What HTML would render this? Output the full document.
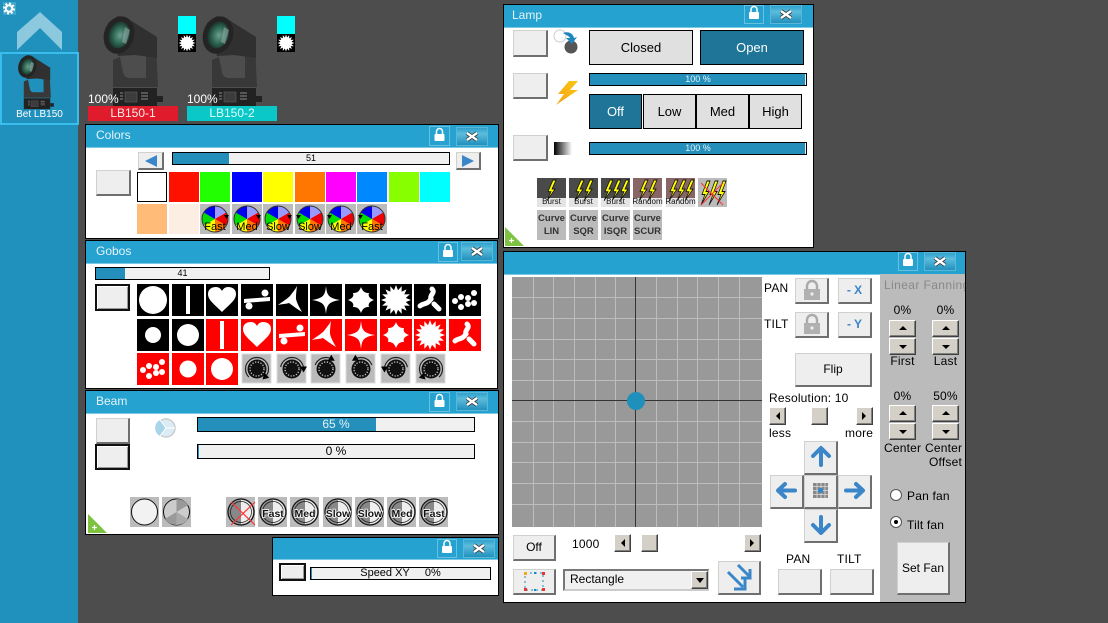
<!DOCTYPE html>
<html><head><meta charset="utf-8"><style>
html,body{margin:0;padding:0}
body{width:1108px;height:623px;background:#4d4d4d;overflow:hidden;position:relative;font-family:"Liberation Sans",sans-serif;font-size:12px;color:#000}
div{position:absolute;box-sizing:border-box;white-space:nowrap}
.w{background:#fff;border:1px solid #000}
.tb{left:0;top:0;right:0;background:#25a2cf;border-bottom:1px solid #7cc9e4;color:#e6f4fa;font-size:12px;padding-left:10px}
.b{background:#eee;border:1px solid;border-color:#d0d0cc #6f6f6f #6f6f6f #d0d0cc;border-width:1px 2px 2px 1px;text-align:center}
.bk{background:#eee;border:2px solid #111;box-shadow:inset 1px 1px 0 #fff,inset -1px -1px 0 #999}
.p{background:#f0f0f0;border:1px solid #000;overflow:hidden}
.f{left:0;top:0;bottom:0;background:#238fba}
.t{left:0;right:0;top:0;bottom:0;text-align:center}
.m{background:#e0e0e0;border:1px solid #000;text-align:center;font-size:14px}
.on{background:#1f7597;color:#fff}
.s{background:#d4d0c8;border:1px solid;border-color:#fff #404040 #404040 #fff;box-shadow:inset -1px -1px 0 #808080}
.l{font-size:12px;letter-spacing:.2px}
.sw{width:30px;height:30px}
</style></head><body>
<div style="left:0;top:0;width:78px;height:623px;background:#2090bd"></div>
<div style="left:0;top:52px;width:79px;height:73px;border:2px solid #38bdec;background:#2090bd"></div>
<div style="left:0;top:109px;width:79px;text-align:center;color:#fff;font-size:10px;line-height:12px">Bet LB150</div>

<div style="left:88px;top:106px;width:90px;height:15px;background:#e01b2b;color:#ffe9e9;text-align:center;line-height:15px">LB150-1</div>
<div style="left:187px;top:106px;width:90px;height:15px;background:#0bc8c8;color:#dff;text-align:center;line-height:15px">LB150-2</div>
<div style="left:178px;top:16px;width:18px;height:18px;background:#0ff"></div>
<div style="left:277px;top:16px;width:18px;height:18px;background:#0ff"></div>

<!-- Colors -->
<div class="w" style="left:85px;top:124px;width:414px;height:115px"><div class="tb" style="height:23px;line-height:21px"><div style="left:10px;top:0;width:35px;overflow:hidden">Colors</div></div></div>
<div class="b" style="left:96px;top:170px;width:35px;height:26px"></div>
<div class="b" style="left:138px;top:152px;width:26px;height:18px"></div>
<div class="p" style="left:172px;top:152px;width:278px;height:13px;font-size:9px;line-height:11px"><div class="f" style="width:56px"></div><div class="t">51</div></div>
<div class="b" style="left:456px;top:152px;width:25px;height:18px"></div>
<div class="sw" style="left:137px;top:172px;background:#fff;border:1px solid #000"></div>
<div class="sw" style="left:169px;top:172px;background:#f10"></div>
<div class="sw" style="left:200px;top:172px;background:#2f0"></div>
<div class="sw" style="left:232px;top:172px;background:#00f"></div>
<div class="sw" style="left:263px;top:172px;background:#ff0"></div>
<div class="sw" style="left:295px;top:172px;background:#f70"></div>
<div class="sw" style="left:326px;top:172px;background:#f0f"></div>
<div class="sw" style="left:357px;top:172px;background:#08f"></div>
<div class="sw" style="left:389px;top:172px;background:#8f0"></div>
<div class="sw" style="left:420px;top:172px;background:#0ff"></div>
<div class="sw" style="left:137px;top:204px;background:#fb7"></div>
<div class="sw" style="left:169px;top:204px;background:#fdeee4"></div>

<!-- Gobos -->
<div class="w" style="left:85px;top:240px;width:413px;height:149px"><div class="tb" style="height:23px;line-height:21px">Gobos</div></div>
<div class="p" style="left:95px;top:267px;width:175px;height:13px;font-size:9px;line-height:11px"><div class="f" style="width:29px"></div><div class="t">41</div></div>
<div class="bk" style="left:95px;top:284px;width:35px;height:27px"></div>

<!-- Beam -->
<div class="w" style="left:85px;top:390px;width:414px;height:145px"><div class="tb" style="height:23px;line-height:21px">Beam</div></div>
<div class="b" style="left:96px;top:418px;width:34px;height:26px"></div>
<div class="bk" style="left:95px;top:444px;width:35px;height:26px"></div>
<div class="p" style="left:197px;top:417px;width:278px;height:15px;line-height:13px"><div class="f" style="width:178px"></div><div class="t" style="color:#e6f4fa">65 %</div></div>
<div class="p" style="left:197px;top:444px;width:278px;height:15px;line-height:13px"><div class="f" style="width:1px"></div><div class="t">0 %</div></div>

<!-- Speed -->
<div class="w" style="left:272px;top:537px;width:227px;height:59px"><div class="tb" style="height:22px"></div></div>
<div class="bk" style="left:279px;top:563px;width:27px;height:18px"></div>
<div class="p" style="left:310px;top:567px;width:181px;height:13px;line-height:11px;font-size:11px"><div class="f" style="width:1px"></div><div class="t" style="white-space:pre">Speed XY     0%</div></div>

<!-- Lamp -->
<div class="w" style="left:503px;top:4px;width:311px;height:244px"><div class="tb" style="height:23px;line-height:21px;padding-left:8px">Lamp</div></div>
<div class="b" style="left:513px;top:30px;width:35px;height:27px"></div>
<div class="b" style="left:513px;top:73px;width:35px;height:26px"></div>
<div class="b" style="left:513px;top:135px;width:35px;height:26px"></div>
<div class="m" style="left:589px;top:30px;width:104px;height:35px;line-height:33px;font-size:13px">Closed</div>
<div class="m on" style="left:700px;top:30px;width:104px;height:35px;line-height:33px;font-size:13px">Open</div>
<div class="p" style="left:589px;top:73px;width:218px;height:13px;line-height:11px;font-size:9px"><div class="f" style="width:215px"></div><div class="t" style="color:#e6f4fa">100 %</div></div>
<div class="m on" style="left:589px;top:94px;width:53px;height:35px;line-height:33px;font-size:13px">Off</div>
<div class="m" style="left:643px;top:94px;width:53px;height:35px;line-height:33px;font-size:13px">Low</div>
<div class="m" style="left:696px;top:94px;width:53px;height:35px;line-height:33px;font-size:13px">Med</div>
<div class="m" style="left:749px;top:94px;width:53px;height:35px;line-height:33px;font-size:13px">High</div>
<div class="p" style="left:589px;top:142px;width:218px;height:13px;line-height:11px;font-size:9px"><div class="f" style="width:215px"></div><div class="t" style="color:#e6f4fa">100 %</div></div>
<div style="left:554px;top:142px;width:18px;height:13px;background:linear-gradient(90deg,#000,#fff)"></div>

<!-- XY -->
<div class="w" style="left:503px;top:251px;width:463px;height:352px"><div class="tb" style="height:23px"></div></div>
<div style="left:880px;top:274px;width:85px;height:328px;background:#bbb"></div>
<div class="l" style="left:764px;top:281px">PAN</div>
<div class="l" style="left:764px;top:317px">TILT</div>
<div class="b" style="left:795px;top:278px;width:34px;height:26px"></div>
<div class="b" style="left:838px;top:278px;width:34px;height:26px;color:#3a86c8;font-weight:bold;line-height:22px">- X</div>
<div class="b" style="left:795px;top:312px;width:34px;height:26px"></div>
<div class="b" style="left:838px;top:312px;width:34px;height:26px;color:#3a86c8;font-weight:bold;line-height:22px">- Y</div>
<div class="b" style="left:795px;top:353px;width:77px;height:34px;line-height:31px">Flip</div>
<div class="l" style="left:769px;top:391px">Resolution: 10</div>
<div class="s" style="left:769px;top:407px;width:17px;height:18px"></div>
<div class="s" style="left:811px;top:407px;width:17px;height:18px"></div>
<div class="s" style="left:856px;top:407px;width:17px;height:18px"></div>
<div class="l" style="left:769px;top:426px">less</div>
<div class="l" style="left:845px;top:426px">more</div>
<div class="b" style="left:804px;top:441px;width:34px;height:34px"></div>
<div class="b" style="left:770px;top:475px;width:34px;height:34px"></div>
<div class="b" style="left:804px;top:475px;width:34px;height:34px"></div>
<div class="b" style="left:838px;top:475px;width:34px;height:34px"></div>
<div class="b" style="left:804px;top:509px;width:34px;height:34px"></div>
<div class="l" style="left:786px;top:552px">PAN</div>
<div class="l" style="left:837px;top:552px">TILT</div>
<div class="b" style="left:778px;top:569px;width:44px;height:26px"></div>
<div class="b" style="left:830px;top:569px;width:44px;height:26px"></div>
<div class="b" style="left:513px;top:535px;width:43px;height:26px;line-height:23px">Off</div>
<div class="l" style="left:572px;top:537px">1000</div>
<div class="s" style="left:614px;top:534px;width:17px;height:18px"></div>
<div class="s" style="left:641px;top:534px;width:17px;height:18px"></div>
<div class="s" style="left:744px;top:534px;width:17px;height:18px"></div>
<div class="b" style="left:513px;top:569px;width:43px;height:26px"></div>
<div style="left:563px;top:569px;width:146px;height:22px;background:#f0f0f0;border:1px solid;border-color:#777 #ccc #ccc #777;border-width:2px 1px 2px 2px;padding-left:5px;line-height:17px">Rectangle</div>
<div class="s" style="left:691px;top:571px;width:17px;height:18px"></div>
<div class="b" style="left:718px;top:561px;width:43px;height:34px"></div>

<div style="left:884px;top:278px;width:81px;overflow:hidden;color:#888;letter-spacing:.4px">Linear Fanning</div>
<div class="l" style="left:889px;top:303px;width:27px;text-align:center">0%</div>
<div class="l" style="left:932px;top:303px;width:27px;text-align:center">0%</div>
<div class="s" style="left:889px;top:320px;width:27px;height:17px"></div>
<div class="s" style="left:932px;top:320px;width:27px;height:17px"></div>
<div class="s" style="left:889px;top:338px;width:27px;height:17px"></div>
<div class="s" style="left:932px;top:338px;width:27px;height:17px"></div>
<div class="l" style="left:882px;top:354px;width:41px;text-align:center">First</div>
<div class="l" style="left:925px;top:354px;width:41px;text-align:center">Last</div>
<div class="l" style="left:889px;top:389px;width:27px;text-align:center">0%</div>
<div class="l" style="left:932px;top:389px;width:27px;text-align:center">50%</div>
<div class="s" style="left:889px;top:405px;width:27px;height:17px"></div>
<div class="s" style="left:932px;top:405px;width:27px;height:17px"></div>
<div class="s" style="left:889px;top:423px;width:27px;height:17px"></div>
<div class="s" style="left:932px;top:423px;width:27px;height:17px"></div>
<div class="l" style="left:884px;top:441px">Center</div>
<div class="l" style="left:925px;top:441px">Center</div>
<div class="l" style="left:929px;top:455px">Offset</div>
<div class="l" style="left:907px;top:489px">Pan fan</div>
<div class="l" style="left:907px;top:518px">Tilt fan</div>
<div class="b" style="left:897px;top:542px;width:53px;height:53px;line-height:51px">Set Fan</div>

<svg width="1108" height="623" viewBox="0 0 1108 623" style="position:absolute;left:0;top:0" xmlns="http://www.w3.org/2000/svg" font-family="Liberation Sans, sans-serif">
<defs>
<radialGradient id="lens" cx=".55" cy=".5" r=".6"><stop offset="0" stop-color="#6f9f90"/><stop offset=".5" stop-color="#2f6a55"/><stop offset="1" stop-color="#15241f"/></radialGradient>
<linearGradient id="xg" x1="0" y1="0" x2="0" y2="1"><stop offset="0" stop-color="#2a9fcb"/><stop offset=".35" stop-color="#5cbcdd"/><stop offset="1" stop-color="#1f8fbb"/></linearGradient>
<linearGradient id="bg" x1="1" y1="0" x2="0" y2="1"><stop offset="0" stop-color="#f9c80e"/><stop offset="1" stop-color="#f5a31c"/></linearGradient>
<g id="fx">
<path d="M113 106V88H157V106Z" fill="#222"/><path d="M157 96h6v6h-6z" fill="#222"/>
<rect x="125" y="92" width="12" height="10" fill="#3c3c3c" stroke="#666" stroke-width=".5"/><path d="M120 93h3M120 96h3M120 99h3M141 93h7M141 96h7M141 99h7" stroke="#777" stroke-width="1.300"/>
<path d="M146 48L156 44L158 87H113L113 60L120 57L123 72Q124 78 130 78L146 78Z" fill="#383838"/>
<path d="M108 23L118 16L130 20L157 37L157 58L135 55L118 56Z" fill="#303030"/>
<ellipse cx="119" cy="35" rx="15" ry="19" transform="rotate(18 119 35)" fill="#242424"/>
<ellipse cx="119" cy="35" rx="10.500" ry="13.500" transform="rotate(18 119 35)" fill="url(#lens)"/>
<path d="M125 27L130 30L126 44L122 42Z" fill="#a8b8ba" opacity=".5"/>
</g>
<polygon id="star" fill="#fff" transform="translate(16 16)" points="15,0 9.800,2 13.900,5.700 8.300,5.600 10.600,10.600 5.600,8.300 5.700,13.900 2,9.800 0,15 -2,9.800 -5.700,13.900 -5.600,8.300 -10.600,10.600 -8.300,5.600 -13.900,5.700 -9.800,2 -15,0 -9.800,-2 -13.900,-5.700 -8.300,-5.600 -10.600,-10.600 -5.600,-8.300 -5.700,-13.900 -2,-9.800 0,-15 2,-9.800 5.700,-13.900 5.600,-8.300 10.600,-10.600 8.300,-5.600 13.900,-5.700 9.800,-2"/>
<path id="heart" fill="#fff" d="M16 28C8 20 2 16 2 10C2 5 6 3 10 3C13 3 15 5 16 7C17 5 19 3 22 3C26 3 30 5 30 10C30 16 24 20 16 28Z"/>
<g id="bd" fill="#fff"><path d="M3 15L29 13V17L3 19Z"/><circle cx="24" cy="9" r="3.500"/><circle cx="8" cy="22" r="3.500"/></g>
<path id="y" fill="#fff" d="M21 2C20 9 20 12 20 15C21 19 23 23 26 28C21 25 17 22 13 19C10 20 6 20 2 21C6 18 11 15 14 12C16 9 19 6 21 2Z"/>
<path id="s4" fill="#fff" d="M16 2C17 11 18 14 30 16C18 18 17 21 16 30C15 21 14 18 2 16C14 14 15 11 16 2Z"/>
<path id="s5" fill="#fff" d="M16 3C18 8 20 9 24 9C23 12 24 14 29 16C24 18 23 20 24 23C20 23 18 24 16 29C14 24 12 23 8 23C9 20 8 18 3 16C8 14 9 12 8 9C12 9 14 8 16 3Z"/>
<g id="fan" fill="none" stroke="#fff" stroke-width="5" stroke-linecap="round"><path d="M18 5C22 9 15 11 17 15C13 21 9 19 6 22"/><path d="M20 20L25 25"/></g>
<g id="dots" fill="#fff"><circle cx="6" cy="17" r="3"/><circle cx="12" cy="13" r="3"/><circle cx="19" cy="14" r="3"/><circle cx="25" cy="9" r="3"/><circle cx="12" cy="23" r="3"/><circle cx="19" cy="20" r="3"/><circle cx="25" cy="19" r="3"/></g>
<g id="rotb"><rect width="29" height="29" fill="#bbb" stroke="#ddd"/><circle cx="15" cy="15" r="9.500" fill="#111"/><circle cx="15" cy="15" r="7" fill="none" stroke="#ccc" stroke-width="1.300" stroke-dasharray="1.200 1.600"/></g>
<g id="wh"><rect width="30" height="30" fill="#bbb"/>
<path d="M15 15V2A13 13 0 0 1 26.300 8.500Z" fill="#99f"/><path d="M15 15L26.300 8.500A13 13 0 0 1 26.300 21.500Z" fill="#e00"/><path d="M15 15L26.300 21.500A13 13 0 0 1 15 28Z" fill="#f70"/><path d="M15 15V28A13 13 0 0 1 3.700 21.500Z" fill="#ff0"/><path d="M15 15L3.700 21.500A13 13 0 0 1 3.700 8.500Z" fill="#0d0"/><path d="M15 15L3.700 8.500A13 13 0 0 1 15 2Z" fill="#00e"/>
<circle cx="15" cy="15" r="13" fill="none" stroke="#333"/></g>
<g id="bw"><rect width="29" height="30" fill="#bbb"/><path d="M15 3A12 12 0 0 1 15 27Z" fill="#eee"/><path d="M15 3A12 12 0 0 0 15 27Z" fill="#888"/><circle cx="15" cy="15" r="13" fill="none" stroke="#111" stroke-width="1.300"/><circle cx="15" cy="15" r="10.500" fill="none" stroke="#111" stroke-width=".7"/></g>
<path id="bolt" d="M6 0L1 9H4L0 16L8 7H5L9 0Z" fill="#ff0" stroke="#111" stroke-width=".7"/>
<g id="lock"><path d="M-3 0V-2.500a3 3 0 0 1 6 0V0" fill="none" stroke="#fff" stroke-width="1.500"/><rect x="-5" y="0" width="10" height="7" rx="1" fill="#fff"/></g>
<g id="xb"><rect x=".5" y=".5" width="31" height="18" fill="url(#xg)" stroke="#5cb6d8"/><path d="M11 6L21 13M21 6L11 13" stroke="#333" stroke-width="4"/><path d="M11 6L21 13M21 6L11 13" stroke="#fff" stroke-width="2.400"/></g>
<g id="lk2"><path d="M-5 0V-3a5 5 0 0 1 10 0V0" fill="none" stroke="#aaa" stroke-width="2.400"/><rect x="-8" y="0" width="16" height="11" fill="#b0b0b0"/><circle cy="5" r="1.600" fill="#eee"/></g>
<path id="tri" d="M0 0L19 19H0Z" fill="#7dc241"/>
<path id="ah" d="M-3.500 -2.500H3.500L0 3.500Z" fill="#000"/>
</defs>

<!-- sidebar -->
<rect x="3" y="2" width="13" height="13" fill="#3ea5cb"/><circle cx="9" cy="8.500" r="3.200" fill="none" stroke="#fff" stroke-width="2"/><circle cx="9" cy="8.500" r="5" fill="none" stroke="#fff" stroke-width="2" stroke-dasharray="2 1.900"/>
<path d="M40 12L62 32V50L40 28L17 50V32Z" fill="#8cc9df"/>
<use href="#fx" transform="translate(-44 45.500) scale(.6)"/>
<use href="#fx"/>
<use href="#fx" transform="translate(99 0)"/>
<text x="88" y="103" fill="#fff" font-size="12">100%</text><text x="187" y="103" fill="#fff" font-size="12">100%</text>
<g transform="translate(178 34) scale(.5625)"><rect width="32" height="32"/><use href="#star"/></g>
<g transform="translate(277 34) scale(.5625)"><rect width="32" height="32"/><use href="#star"/></g>

<!-- window controls -->
<g>
<rect x="429.500" y="126.500" width="20" height="19" fill="#25a2cf" stroke="#6ac0e0"/><use href="#lock" x="439.500" y="134"/><use href="#xb" x="456" y="127"/>
<rect x="438.500" y="242.500" width="19" height="19" fill="#25a2cf" stroke="#6ac0e0"/><use href="#lock" x="448" y="250"/><use href="#xb" x="461" y="242"/>
<rect x="429.500" y="392.500" width="20" height="19" fill="#25a2cf" stroke="#6ac0e0"/><use href="#lock" x="439.500" y="400"/><use href="#xb" x="456" y="392"/>
<rect x="437.500" y="539.500" width="19" height="18" fill="#25a2cf" stroke="#6ac0e0"/><use href="#lock" x="447" y="546"/><use href="#xb" x="463" y="539"/>
<rect x="744.500" y="5.500" width="19" height="18" fill="#25a2cf" stroke="#6ac0e0"/><use href="#lock" x="754" y="12"/><use href="#xb" x="770" y="5"/>
<rect x="898.500" y="252.500" width="19" height="18" fill="#25a2cf" stroke="#6ac0e0"/><use href="#lock" x="908" y="259"/><use href="#xb" x="924" y="252"/>
</g>

<!-- colors arrows & wheels -->
<path d="M145 161L157 155V167Z" fill="#3a86c8"/><path d="M474 161L462 155V167Z" fill="#3a86c8"/>
<g font-size="11" text-anchor="middle" fill="#000">
<g transform="translate(200 204)"><use href="#wh"/><path d="M24 11h5l-2.500 4z"/><text x="15" y="26">Fast</text></g>
<g transform="translate(232 204)"><use href="#wh"/><path d="M24 11h5l-2.500 4z"/><text x="15" y="26">Med</text></g>
<g transform="translate(263 204)"><use href="#wh"/><path d="M24 11h5l-2.500 4z"/><text x="15" y="26">Slow</text></g>
<g transform="translate(295 204)"><use href="#wh"/><path d="M1 11h5l-2.500 4z"/><text x="15" y="26">Slow</text></g>
<g transform="translate(326 204)"><use href="#wh"/><path d="M1 11h5l-2.500 4z"/><text x="15" y="26">Med</text></g>
<g transform="translate(357 204)"><use href="#wh"/><path d="M1 11h5l-2.500 4z"/><text x="15" y="26">Fast</text></g>
</g>

<!-- gobos -->
<g fill="#000">
<rect x="137" y="284" width="32" height="32"/><circle cx="153" cy="300" r="14" fill="#fff"/>
<rect x="172" y="284" width="32" height="32"/><rect x="186" y="286" width="4" height="28" fill="#fff"/>
<rect x="206" y="284" width="32" height="32"/><use href="#heart" x="206" y="284"/>
<rect x="241" y="284" width="32" height="32"/><use href="#bd" x="241" y="284"/>
<rect x="276" y="284" width="32" height="32"/><use href="#y" x="276" y="284"/>
<rect x="310" y="284" width="32" height="32"/><use href="#s4" x="310" y="284"/>
<rect x="345" y="284" width="32" height="32"/><use href="#s5" x="345" y="284"/>
<rect x="380" y="284" width="32" height="32"/><use href="#star" x="380" y="284"/>
<rect x="414" y="284" width="32" height="32"/><use href="#fan" x="414" y="284"/>
<rect x="449" y="284" width="32" height="32"/><use href="#dots" x="449" y="284"/>
<rect x="137" y="319" width="32" height="32"/><circle cx="153" cy="335" r="8" fill="#fff"/>
<rect x="172" y="319" width="32" height="32"/><circle cx="188" cy="335" r="11" fill="#fff"/>
</g>
<g fill="#f00">
<rect x="206" y="319" width="32" height="32"/><rect x="220" y="321" width="4" height="28" fill="#fff"/>
<rect x="241" y="319" width="32" height="32"/><use href="#heart" x="241" y="319"/>
<rect x="276" y="319" width="32" height="32"/><use href="#bd" x="276" y="319"/>
<rect x="310" y="319" width="32" height="32"/><use href="#y" x="310" y="319"/>
<rect x="345" y="319" width="32" height="32"/><use href="#s4" x="345" y="319"/>
<rect x="380" y="319" width="32" height="32"/><use href="#s5" x="380" y="319"/>
<rect x="414" y="319" width="32" height="32"/><use href="#star" x="414" y="319"/>
<rect x="449" y="319" width="32" height="32"/><use href="#fan" x="449" y="319"/>
<rect x="137" y="353" width="32" height="32"/><use href="#dots" x="137" y="353"/>
<rect x="172" y="353" width="32" height="32"/><circle cx="188" cy="369" r="8.500" fill="#fff"/>
<rect x="206" y="353" width="32" height="32"/><circle cx="222" cy="369" r="11" fill="#fff"/>
</g>
<use href="#rotb" x="242" y="354"/><use href="#rotb" x="277" y="354"/><use href="#rotb" x="311" y="354"/><use href="#rotb" x="346" y="354"/><use href="#rotb" x="381" y="354"/><use href="#rotb" x="416" y="354"/>
<g fill="none" stroke="#222" stroke-width="1.200">
<circle cx="257" cy="369" r="11.500" stroke-dasharray="54 30" transform="rotate(135 257 369)"/>
<circle cx="292" cy="369" r="11.500" stroke-dasharray="34 50" transform="rotate(190 292 369)"/>
<circle cx="326" cy="369" r="11.500" stroke-dasharray="20 60" transform="rotate(200 326 369)"/>
<circle cx="361" cy="369" r="11.500" stroke-dasharray="20 60" transform="rotate(240 361 369)"/>
<circle cx="396" cy="369" r="11.500" stroke-dasharray="34 50" transform="rotate(180 396 369)"/>
<circle cx="431" cy="369" r="11.500" stroke-dasharray="54 30" transform="rotate(135 431 369)"/>
</g>
<use href="#ah" transform="translate(265 377) rotate(45)"/><use href="#ah" transform="translate(303.500 369)"/><use href="#ah" transform="translate(331.700 359) rotate(-60)"/><use href="#ah" transform="translate(355 359) rotate(60)"/><use href="#ah" transform="translate(384.500 369)"/><use href="#ah" transform="translate(423 377) rotate(-45)"/>

<!-- beam -->
<circle cx="166" cy="428" r="9" fill="#dcecf4" stroke="#ccc" stroke-width="1.500"/><path d="M166 428L160 420A9 9 0 0 0 160 436Z" fill="#a8d5ea"/><path d="M166 428H175M166 428L160 420M166 428L160 436" stroke="#fff"/>
<rect x="130" y="497" width="29" height="30" fill="#bbb"/><circle cx="144.500" cy="512" r="13" fill="#f2f2f2" stroke="#111"/>
<rect x="162" y="497" width="29" height="30" fill="#bbb"/><circle cx="176.500" cy="512" r="13" fill="#ccc" stroke="#111"/><path d="M176.500 512L188 505A13 13 0 0 0 176.500 499ZM176.500 512L165 519A13 13 0 0 0 176.500 525Z" fill="#999"/><path d="M176.500 512L188 519A13 13 0 0 1 176.500 525Z" fill="#aaa"/>
<use href="#bw" x="226" y="497"/><path d="M231 502L255 525M255 502L231 525" stroke="#f33" stroke-width="1.200"/>
<g font-size="10.500" font-weight="bold" text-anchor="middle" fill="#111" stroke="#fff" stroke-width="1.500" paint-order="stroke">
<use href="#bw" x="258" y="497" stroke="none"/><text x="273" y="517">Fast</text>
<use href="#bw" x="290" y="497" stroke="none"/><text x="305" y="517">Med</text>
<use href="#bw" x="323" y="497" stroke="none"/><text x="338" y="517">Slow</text>
<use href="#bw" x="355" y="497" stroke="none"/><text x="370" y="517">Slow</text>
<use href="#bw" x="387" y="497" stroke="none"/><text x="402" y="517">Med</text>
<use href="#bw" x="419" y="497" stroke="none"/><text x="434" y="517">Fast</text>
</g>
<use href="#tri" x="88" y="514"/><path d="M92 527.500h5M94.500 525v5" stroke="#fff" stroke-width="1.200"/>

<!-- lamp icons -->
<circle cx="560" cy="36" r="6" fill="#fff" stroke="#ccc"/><circle cx="571" cy="47" r="6.500" fill="#555"/><path d="M563 33C568 31 573 33 574 38L577 37L572 44L566 38L570 38C569 36 566 35 563 33Z" fill="#1c86bd"/>
<path d="M569 81L558 94H564L556 105L578 90H570L578 81Z" fill="url(#bg)"/>
<g font-size="8" text-anchor="middle" fill="#111">
<g transform="translate(537 178)"><rect width="29" height="29" fill="#e4e4e4"/><rect width="29" height="20" fill="#4a4a4a"/><use href="#bolt" transform="translate(10 2) scale(1 1.300)"/><text x="14.500" y="26">Burst</text></g>
<g transform="translate(569 178)"><rect width="29" height="29" fill="#e4e4e4"/><rect width="29" height="20" fill="#4a4a4a"/><use href="#bolt" transform="translate(6 2) scale(1 1.300)"/><use href="#bolt" transform="translate(15 2) scale(1 1.300)"/><text x="14.500" y="26">Burst</text></g>
<g transform="translate(601 178)"><rect width="29" height="29" fill="#e4e4e4"/><rect width="29" height="20" fill="#4a4a4a"/><use href="#bolt" transform="translate(3 2) scale(1 1.300)"/><use href="#bolt" transform="translate(11 2) scale(1 1.300)"/><use href="#bolt" transform="translate(19 2) scale(1 1.300)"/><text x="14.500" y="26">Burst</text></g>
<g transform="translate(633 178)"><rect width="29" height="29" fill="#e4e4e4"/><rect width="29" height="20" fill="#866"/><use href="#bolt" transform="translate(6 2) scale(1 1.300)"/><use href="#bolt" transform="translate(15 2) scale(1 1.300)"/><text x="14.500" y="26">Random</text></g>
<g transform="translate(666 178)"><rect width="29" height="29" fill="#e4e4e4"/><rect width="29" height="20" fill="#866"/><use href="#bolt" transform="translate(3 2) scale(1 1.300)"/><use href="#bolt" transform="translate(11 2) scale(1 1.300)"/><use href="#bolt" transform="translate(19 2) scale(1 1.300)"/><text x="14.500" y="26">Random</text></g>
<g transform="translate(698 178)"><rect width="29" height="29" fill="#bbb"/><use href="#bolt" transform="translate(3 3) scale(1 1.500)"/><use href="#bolt" transform="translate(11 3) scale(1 1.500)"/><use href="#bolt" transform="translate(19 3) scale(1 1.500)"/><path d="M3 5L25 27M25 5L3 27" stroke="#f33"/></g>
</g>
<g font-size="9.500" font-weight="bold" text-anchor="middle" fill="#333">
<g transform="translate(537 210)"><rect width="29" height="30" fill="#bbb"/><text x="14.500" y="11">Curve</text><text x="14.500" y="24">LIN</text></g>
<g transform="translate(569 210)"><rect width="29" height="30" fill="#bbb"/><text x="14.500" y="11">Curve</text><text x="14.500" y="24">SQR</text></g>
<g transform="translate(601 210)"><rect width="29" height="30" fill="#bbb"/><text x="14.500" y="11">Curve</text><text x="14.500" y="24">ISQR</text></g>
<g transform="translate(633 210)"><rect width="29" height="30" fill="#bbb"/><text x="14.500" y="11">Curve</text><text x="14.500" y="24">SCUR</text></g>
</g>
<use href="#tri" x="505" y="227"/><path d="M509 240.500h5M511.500 238v5" stroke="#fff" stroke-width="1.200"/>

<!-- XY grid -->
<rect x="512" y="277" width="250" height="250" fill="#999"/>
<path d="M533.500 277V527M553.500 277V527M574.500 277V527M595.500 277V527M615.500 277V527M656.500 277V527M677.500 277V527M697.500 277V527M718.500 277V527M739.500 277V527M512 297.500H762M512 318.500H762M512 339.500H762M512 359.500H762M512 380.500H762M512 421.500H762M512 442.500H762M512 462.500H762M512 483.500H762M512 504.500H762" stroke="#bdbdbd" fill="none"/>
<path d="M635.500 277V527M512 400.500H762" stroke="#333"/>
<circle cx="636" cy="401" r="9" fill="#1f8fbb"/>
<use href="#lk2" x="812" y="289"/><use href="#lk2" x="812" y="323"/>
<path d="M780 412v8l-4-4z" fill="#000"/><path d="M862 412v8l4-4z" fill="#000"/>
<path d="M625 539v8l-4-4zM750 539v8l4-4z" fill="#000"/>
<path d="M821 465V449M813 456L821 448L829 456M795 490.500H779M785 484L778 490.500L785 497M846 490.500H862M856 484L863 490.500L856 497M821 517V532M813 525L821 533L829 525" fill="none" stroke="#3a86c8" stroke-width="4" stroke-linecap="round" stroke-linejoin="round"/>
<rect x="813" y="483" width="15" height="15" fill="#888"/><path d="M813 486.500h15M813 490.500h15M813 494.500h15M817 483v15M821 483v15M825 483v15" stroke="#ddd" stroke-width=".8"/><circle cx="820.500" cy="490.500" r="2.500" fill="#2588d0"/>
<rect x="525" y="573" width="18" height="17" fill="none" stroke="#1f8fbb" stroke-dasharray="2 3"/><rect x="524" y="572" width="3" height="3" fill="#f5a623"/><rect x="542" y="572" width="3" height="3" fill="#e33"/><rect x="524" y="588" width="3" height="3" fill="#e33"/><rect x="542" y="588" width="3" height="3" fill="#e33"/><rect x="534" y="572" width="2" height="2" fill="#18c"/><rect x="534" y="589" width="2" height="2" fill="#18c"/>
<path d="M696 578h8l-4 5z" fill="#000"/>
<path d="M728 572L743 587M745 578V589H734M738 565L749 576M750 569V578H741" fill="none" stroke="#3a86c8" stroke-width="3"/>
<g fill="#000">
<path d="M899 330l4-4 4 4zM942 330l4-4 4 4zM899 345l4 4 4-4zM942 345l4 4 4-4zM899 415l4-4 4 4zM942 415l4-4 4 4zM899 430l4 4 4-4zM942 430l4 4 4-4z"/>
</g>
<circle cx="896" cy="495" r="5.500" fill="#fff" stroke="#555"/>
<circle cx="896" cy="522" r="5.500" fill="#fff" stroke="#555"/><circle cx="896" cy="522" r="2" fill="#000"/>
</svg>
</body></html>
